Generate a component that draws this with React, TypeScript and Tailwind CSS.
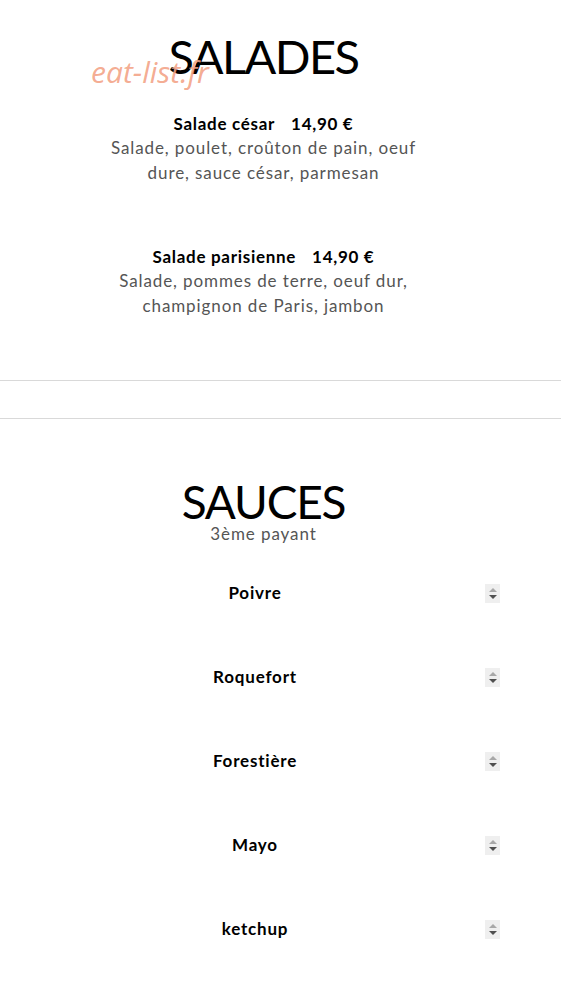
const font = { fontFamily: "Lato, 'Noto Sans', sans-serif" };

const salades = [
  {
    name: "Salade césar",
    price: "14,90 €",
    lines: ["Salade, poulet, croûton de pain, oeuf", "dure, sauce césar, parmesan"],
  },
  {
    name: "Salade parisienne",
    price: "14,90 €",
    lines: ["Salade, pommes de terre, oeuf dur,", "champignon de Paris, jambon"],
  },
];

const sauces = ["Poivre", "Roquefort", "Forestière", "Mayo", "ketchup"];

function Spinner() {
  return (
    <div className="flex h-[19px] w-[15px] flex-col items-center justify-center gap-[3px] bg-[#efefef]">
      <div className="h-0 w-0 border-x-[4px] border-b-[4px] border-x-transparent border-b-[#a8a8a8]" />
      <div className="h-0 w-0 border-x-[4px] border-t-[4px] border-x-transparent border-t-[#505050]" />
    </div>
  );
}

export default function App() {
  return (
    <div className="min-h-[981px] w-[561px] bg-white text-black" style={font}>
      {/* salades */}
      <section className="relative flex w-[527px] flex-col items-center pt-[27px]">
        <h1 className="text-[47px] leading-[58px] tracking-[-1.6px]">SALADES</h1>
        <span
          className="absolute left-[91px] top-[49px] text-[30px] italic text-[#f3a285]/90"
          style={{ fontFamily: "'Open Sans', sans-serif" }}
        >
          eat-list.fr
        </span>

        <div className="mt-[28px] flex flex-col items-center gap-[61px]">
          {salades.map((s) => (
            <div key={s.name} className="flex flex-col items-center">
              <div className="flex gap-[16px] text-[17px] font-bold leading-[22px] tracking-[0.7px]">
                <span>{s.name}</span>
                <span>{s.price}</span>
              </div>
              <p className="text-center text-[17px] leading-[25px] tracking-[0.9px] text-[#555]">
                {s.lines[0]}
                <br />
                {s.lines[1]}
              </p>
            </div>
          ))}
        </div>
      </section>

      <div className="mt-[62px] h-[39px] border-y border-[#d9d9d9]" />

      {/* sauces */}
      <section className="flex w-[527px] flex-col items-center pt-[57px]">
        <h2 className="text-[46px] leading-[52px] tracking-[-1.2px]">SAUCES</h2>
        <p className="-mt-[5px] text-[17px] leading-[22px] tracking-[0.9px] text-[#555]">3ème payant</p>
      </section>

      <div className="mt-[37px] flex w-full flex-col gap-[62px] pl-[25px] pr-[61px]">
        {sauces.map((n) => (
          <div key={n} className="flex h-[22px] items-center">
            <span className="flex-1 text-center text-[17px] font-bold tracking-[0.8px]">{n}</span>
            <Spinner />
          </div>
        ))}
      </div>
    </div>
  );
}
